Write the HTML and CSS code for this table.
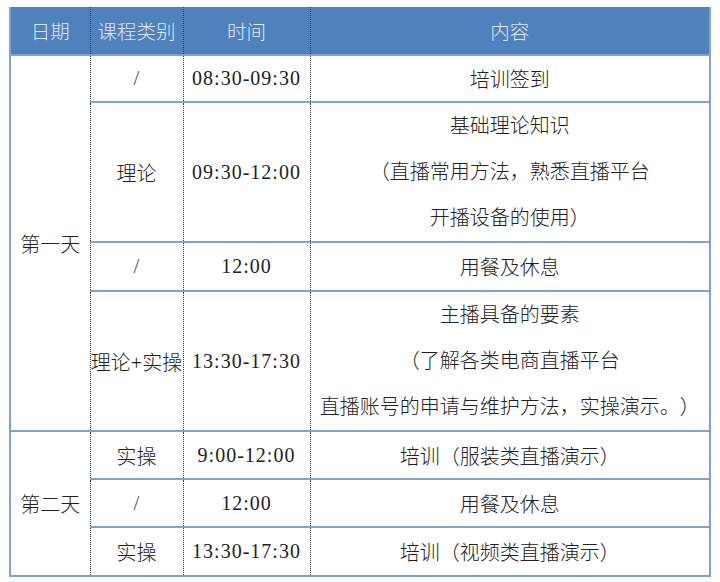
FILE: index.html
```html
<!DOCTYPE html>
<html lang="zh-CN">
<head>
<meta charset="utf-8">
<title>课程安排</title>
<link rel="stylesheet" href="styles.css">
</head>
<body>
<div class="page">
<table class="schedule">
  <colgroup>
    <col class="c-date">
    <col class="c-type">
    <col class="c-time">
    <col class="c-content">
  </colgroup>
  <thead>
    <tr class="r-head">
      <th>日期</th>
      <th>课程类别</th>
      <th>时间</th>
      <th>内容</th>
    </tr>
  </thead>
  <tbody>
    <tr class="r-47">
      <td class="day" rowspan="4">第一天</td>
      <td class="slash">/</td>
      <td class="time">08:30-09:30</td>
      <td class="content">培训签到</td>
    </tr>
    <tr class="r-139">
      <td>理论</td>
      <td class="time">09:30-12:00</td>
      <td class="content multi">基础理论知识<br>（直播常用方法，熟悉直播平台<br>开播设备的使用）</td>
    </tr>
    <tr class="r-49">
      <td class="slash">/</td>
      <td class="time">12:00</td>
      <td class="content">用餐及休息</td>
    </tr>
    <tr class="r-138">
      <td>理论+实操</td>
      <td class="time">13:30-17:30</td>
      <td class="content multi">主播具备的要素<br>（了解各类电商直播平台<br>直播账号的申请与维护方法，实操演示。）</td>
    </tr>
    <tr class="r-48">
      <td class="day" rowspan="3">第二天</td>
      <td>实操</td>
      <td class="time">9:00-12:00</td>
      <td class="content">培训（服装类直播演示）</td>
    </tr>
    <tr class="r-48">
      <td class="slash">/</td>
      <td class="time">12:00</td>
      <td class="content">用餐及休息</td>
    </tr>
    <tr class="r-49">
      <td>实操</td>
      <td class="time">13:30-17:30</td>
      <td class="content">培训（视频类直播演示）</td>
    </tr>
  </tbody>
</table>
</div>
</body>
</html>
```

FILE: styles.css
```css
html, body {
  margin: 0;
  padding: 0;
  background: #ffffff;
}

.page {
  padding: 7px 0 0 9px;
}

.schedule {
  border-collapse: collapse;
  table-layout: fixed;
  width: 700px;
  font-family: "Liberation Serif", "Noto Sans CJK SC", serif;
  font-size: 20px;
  font-weight: 300;
  color: #222222;
  text-spacing-trim: space-all;
  border-left: 2px solid #7fa2d6;
  border-right: 2px solid #7fa2d6;
  border-bottom: 2px solid #7fa2d6;
}

.c-date { width: 80px; }
.c-type { width: 93px; }
.c-time { width: 127px; }
.c-content { width: 400px; }

.schedule th,
.schedule td {
  padding: 0;
  text-align: center;
  vertical-align: middle;
  white-space: nowrap;
  border-left: 1px dotted #3a3a3a;
  border-right: 1px dotted #3a3a3a;
}

.schedule th:first-child,
.schedule td.day {
  border-left: 2px solid #7fa2d6;
}

.schedule th:last-child,
.schedule td.content {
  border-right: 2px solid #7fa2d6;
}

.schedule th {
  background: #4f81bd;
  color: #dfe6f1;
  font-family: "Noto Sans CJK SC", sans-serif;
  font-weight: 300;
  font-size: 19.5px;
}

.schedule tbody td {
  border-top: 2px solid #7fa2d6;
}

.r-head { height: 48px; }
.r-47 { height: 47px; }
.r-48 { height: 48px; }
.r-49 { height: 49px; }
.r-138 { height: 138px; }
.r-139 { height: 139px; }

.slash {
  font-size: 21px;
  color: #555555;
}

.time {
  letter-spacing: 1px;
}

.multi {
  line-height: 46px;
}
```
